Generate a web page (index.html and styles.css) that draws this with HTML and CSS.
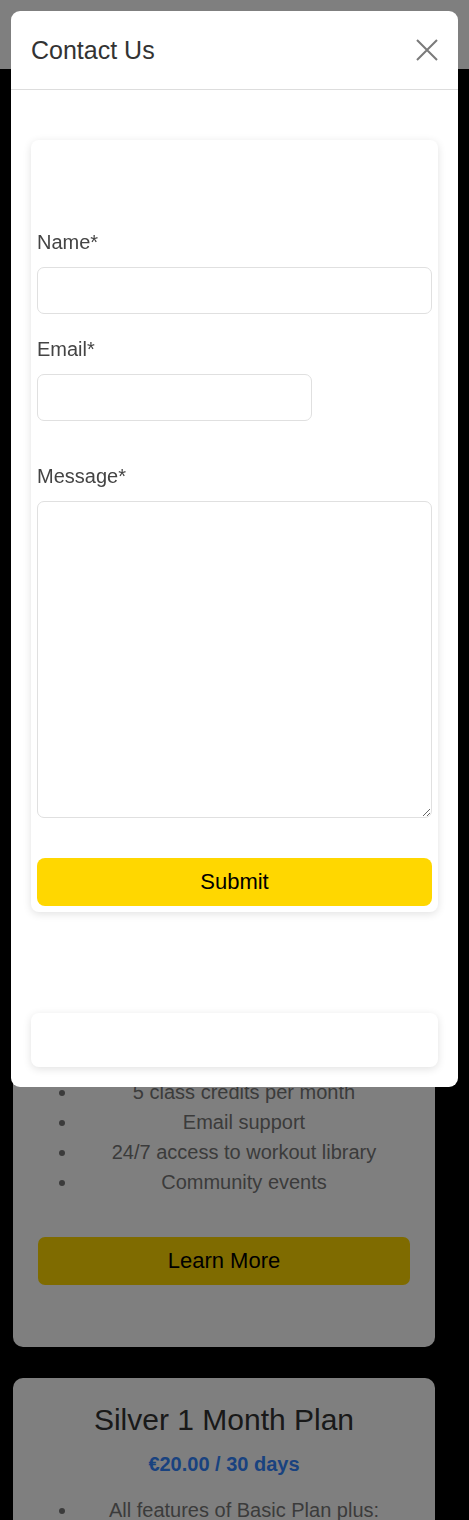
FILE: index.html
```html
<!DOCTYPE html>
<html lang="en">
<head>
<meta charset="utf-8">
<title>Contact Us</title>
<link rel="stylesheet" href="styles.css">
</head>
<body>
<header class="site-header"></header>
<main class="plans">
  <section class="plan">
    <h2 class="plan-title">Basic 1 Month Plan</h2>
    <p class="plan-price">€10.00 / 30 days</p>
    <ul class="plan-features">
      <li>Access to gym facilities</li>
      <li>Basic equipment usage</li>
      <li>Locker room access</li>
      <li>5 class credits per month</li>
      <li>Email support</li>
      <li>24/7 access to workout library</li>
      <li>Community events</li>
    </ul>
    <button class="plan-btn" type="button">Learn More</button>
  </section>
  <section class="plan">
    <h2 class="plan-title">Silver 1 Month Plan</h2>
    <p class="plan-price">€20.00 / 30 days</p>
    <ul class="plan-features">
      <li>All features of Basic Plan plus:</li>
    </ul>
  </section>
</main>

<div class="overlay"></div>

<div class="modal" role="dialog" aria-labelledby="modal-title">
  <div class="modal-header">
    <h1 class="modal-title" id="modal-title">Contact Us</h1>
    <button class="modal-close" type="button" aria-label="Close">
      <svg width="22" height="22" viewBox="0 0 22 22"><path d="M1 1 L21 21 M21 1 L1 21" stroke="#7a7a7a" stroke-width="2" fill="none"/></svg>
    </button>
  </div>
  <div class="modal-body">
    <form class="form-card">
      <label class="form-label" for="name">Name*</label>
      <input class="form-input name-input" id="name" type="text">
      <label class="form-label" for="email">Email*</label>
      <input class="form-input email-input" id="email" type="email">
      <label class="form-label" for="message">Message*</label>
      <textarea class="form-textarea" id="message"></textarea>
      <button class="submit-btn" type="button">Submit</button>
    </form>
    <div class="empty-card"></div>
  </div>
</div>
</body>
</html>
```

FILE: styles.css
```css
* {
  box-sizing: border-box;
}

html, body {
  margin: 0;
  padding: 0;
}

body {
  background: #000;
  font-family: "Liberation Sans", Arial, sans-serif;
  color: #333;
  width: 469px;
  min-height: 1520px;
}

.site-header {
  height: 69px;
  background: #fff;
}

.plans {
  padding: 801px 34px 0 13px;
  display: flex;
  flex-direction: column;
  gap: 31px;
}

.plan {
  background: #fff;
  border-radius: 10px;
  padding: 25px 25px 62px;
  text-align: center;
}

.plan-title {
  margin: 0;
  font-size: 30px;
  font-weight: normal;
  line-height: 34px;
  color: #333;
}

.plan-price {
  margin: 16px 0 0;
  font-size: 20px;
  font-weight: bold;
  line-height: 22px;
  color: #3385ff;
}

.plan-features {
  margin: 20px 0 0;
  padding-left: 40px;
  font-size: 20px;
  line-height: 30px;
  color: #777;
}

.plan-btn {
  display: block;
  width: 100%;
  height: 48px;
  margin-top: 40px;
  border: 0;
  border-radius: 7px;
  background: #ffd700;
  color: #000;
  font-family: "Liberation Sans", Arial, sans-serif;
  font-size: 22px;
}

.overlay {
  position: fixed;
  inset: 0;
  background: rgba(0, 0, 0, 0.5);
}

.modal {
  position: fixed;
  top: 11px;
  left: 11px;
  width: 447px;
  height: 1076px;
  background: #fff;
  border-radius: 9px;
  display: flex;
  flex-direction: column;
}

.modal-header {
  height: 79px;
  padding: 0 20px;
  display: flex;
  align-items: center;
  justify-content: space-between;
  border-bottom: 1px solid #ddd;
}

.modal-title {
  margin: 0;
  font-size: 25px;
  font-weight: normal;
  color: #333;
}

.modal-close {
  border: 0;
  background: none;
  padding: 0;
  width: 22px;
  height: 22px;
  display: flex;
}

.modal-body {
  padding: 50px 20px 20px;
  display: flex;
  flex-direction: column;
}

.form-card {
  background: #fff;
  border-radius: 8px;
  box-shadow: 0 2px 8px rgba(0, 0, 0, 0.12);
  padding: 91px 6px 6px;
  display: flex;
  flex-direction: column;
  align-items: flex-start;
}

.form-label {
  font-size: 20px;
  line-height: 22px;
  color: #444;
  margin-bottom: 14px;
}

.form-input {
  height: 47px;
  border: 1px solid #e0e0e0;
  border-radius: 7px;
  background: #fff;
  font-size: 16px;
}

.name-input {
  width: 100%;
  margin-bottom: 24px;
}

.email-input {
  width: 275px;
  margin-bottom: 44px;
}

.form-textarea {
  width: 100%;
  height: 317px;
  border: 1px solid #e0e0e0;
  border-radius: 7px;
  background: #fff;
  font-size: 16px;
  margin-bottom: 40px;
}

.submit-btn {
  width: 100%;
  height: 48px;
  border: 0;
  border-radius: 8px;
  background: #ffd700;
  color: #000;
  font-family: "Liberation Sans", Arial, sans-serif;
  font-size: 22px;
}

.empty-card {
  margin-top: 101px;
  height: 54px;
  background: #fff;
  border-radius: 8px;
  box-shadow: 0 2px 8px rgba(0, 0, 0, 0.12);
}
```
